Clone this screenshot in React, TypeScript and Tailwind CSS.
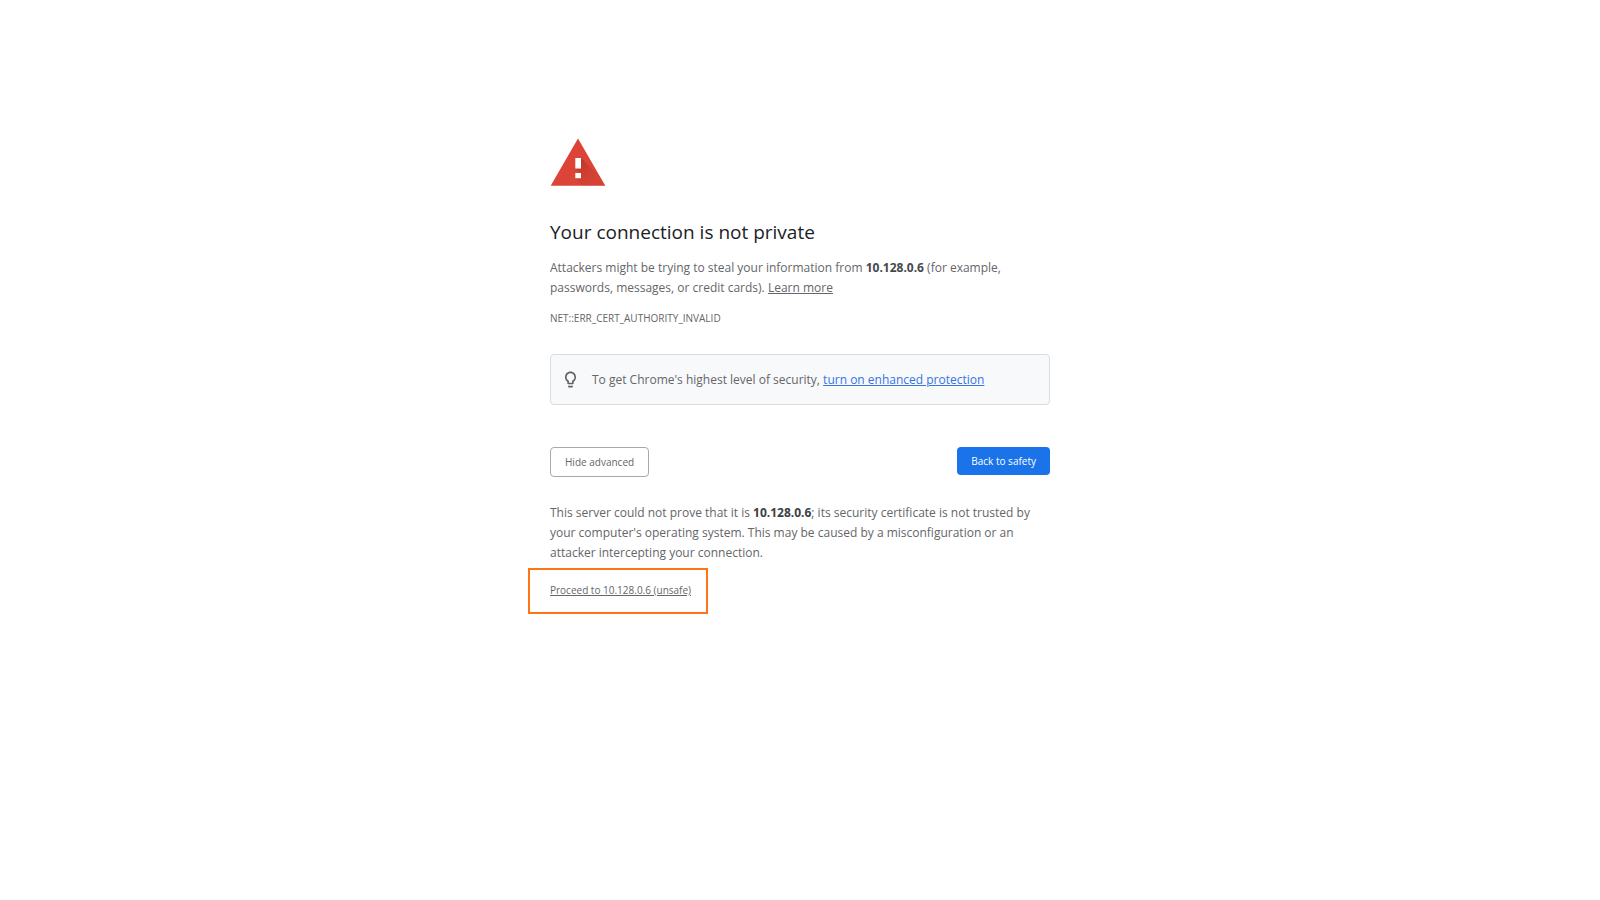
const HOST = '10.128.0.6';

function WarningIcon() {
  return (
    <svg viewBox="0 0 56 48" className="h-12 w-14" role="img" aria-label="Warning">
      <defs>
        <linearGradient id="cast" gradientUnits="userSpaceOnUse" x1="28" y1="24" x2="45" y2="43">
          <stop offset="0" stopColor="#b03222" stopOpacity="0.8" />
          <stop offset="0.6" stopColor="#c0392b" stopOpacity="0.4" />
          <stop offset="1" stopColor="#c53929" stopOpacity="0.15" />
        </linearGradient>
        <clipPath id="triangle">
          <path d="M28 .5 55.300 47.800H.7Z" />
        </clipPath>
      </defs>
      <path d="M28 .5 55.300 47.800H.7Z" fill="#db4437" />
      <g clipPath="url(#triangle)" fill="url(#cast)">
        <path d="M31 20 56 45V48H33.500L25.300 40H31V35.500L25.300 30.500H31Z" />
      </g>
      <path d="M25.300 20H31v10.500h-5.700zM25.300 35H31v5.300h-5.700z" fill="#fff" />
    </svg>
  );
}

function BulbIcon() {
  return (
    <svg viewBox="0 0 24 24" className="size-[19px] shrink-0" fill="#5f6368" aria-hidden="true">
      <path d="M9 21c0 .55.45 1 1 1h4c.55 0 1-.45 1-1v-1H9v1zm3-19C8.140 2 5 5.140 5 9c0 2.380 1.190 4.470 3 5.740V17c0 .55.45 1 1 1h6c.55 0 1-.45 1-1v-2.260c1.810-1.270 3-3.360 3-5.740 0-3.860-3.140-7-7-7zm2.850 11.100-.85.6V16h-4v-2.300l-.85-.6A4.997 4.997 0 0 1 7 9c0-2.760 2.240-5 5-5s5 2.240 5 5c0 1.630-.8 3.160-2.150 4.100z" />
    </svg>
  );
}

export default function App() {
  return (
    <div className="min-h-screen bg-white px-6 pt-[138px] pb-16 font-['Open_Sans','Noto_Sans',sans-serif] text-[12px] leading-5 text-[#646669]">
      <main className="mx-auto max-w-[500px]">
        <WarningIcon />
        <h1 className="mt-8 text-[19px] leading-7 text-[#202124]">
          Your connection is not private
        </h1>
        <p className="mt-3">
          Attackers might be trying to steal your information from{' '}
          <strong className="font-bold text-[#46484b]">{HOST}</strong> (for example, passwords,
          messages, or credit cards).{' '}
          <a href="#learn-more" className="underline">
            Learn more
          </a>
        </p>
        <p className="mt-[10px] text-[10px] leading-5">NET::ERR_CERT_AUTHORITY_INVALID</p>

        <div className="mt-[26px] flex items-start gap-3 rounded-sm border border-[#dadce0] bg-[#f8f9fa] pt-[15px] pr-[10px] pb-[14px] pl-[10px]">
          <BulbIcon />
          <p>
            To get Chrome's highest level of security,{' '}
            <a href="#enhanced-protection" className="text-[#3574e2] underline">
              turn on enhanced protection
            </a>
          </p>
        </div>

        <div className="mt-[42px] flex items-start justify-between">
          <button
            type="button"
            className="rounded-sm border border-[#a6a9ad] px-[14px] py-1 text-[10px] leading-5"
          >
            Hide advanced
          </button>
          <button
            type="button"
            className="rounded-sm bg-[#1a73e8] px-[14px] py-1 text-[10px] leading-5 text-white"
          >
            Back to safety
          </button>
        </div>

        <p className="mt-[26px]">
          This server could not prove that it is{' '}
          <strong className="font-bold text-[#3c4043]">{HOST}</strong>; its security certificate is
          not trusted by your computer's operating system. This may be caused by a misconfiguration
          or an attacker intercepting your connection.
        </p>
        <div className="mt-[5px] -ml-[22px] w-fit border-2 border-[#ff7414] pt-[10px] pr-[15px] pb-3 pl-5 text-[10px] leading-5">
          <a href="#proceed" className="underline">
            Proceed to {HOST} (unsafe)
          </a>
        </div>
      </main>
    </div>
  );
}
